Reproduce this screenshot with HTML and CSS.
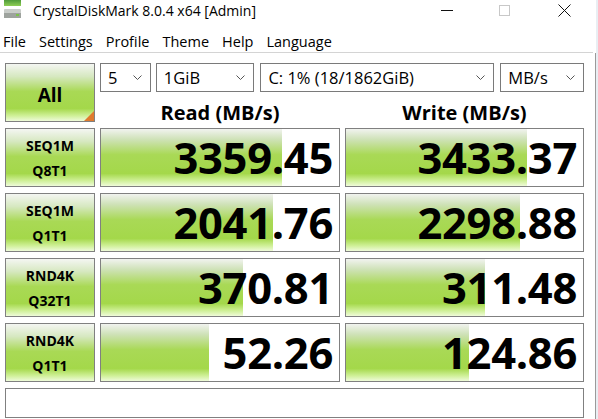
FILE: index.html
```html
<!DOCTYPE html>
<html lang="en">
<head>
  <meta charset="UTF-8" />
  <meta name="viewport" content="width=device-width, initial-scale=1.0" />
  <title>CrystalDiskMark 8.0.4 x64 [Admin]</title>
  <link rel="stylesheet" href="styles.css">
</head>
<body>
  <div class="window">
    <div class="titlebar">
      <svg class="app-icon" width="20" height="20" viewBox="0 0 20 20">
        <defs>
          <linearGradient id="lid" x1="0" y1="0" x2="0" y2="1">
            <stop offset="0" stop-color="#4f9a3a" />
            <stop offset="1" stop-color="#8fcf55" />
          </linearGradient>
        </defs>
        <rect x="1" y="0" width="17" height="6" fill="url(#lid)" />
        <rect x="1" y="9" width="17" height="9" rx="1" fill="#c9cdc9" />
        <rect x="1" y="13" width="17" height="5" fill="#9ea39e" />
        <rect x="13" y="14" width="3" height="2" fill="#7cc24a" />
      </svg>
      <span class="title-text">CrystalDiskMark 8.0.4 x64 [Admin]</span>
      <div class="win-controls">
        <span class="ctl ctl-min"></span>
        <span class="ctl ctl-max"></span>
        <svg class="ctl ctl-close" width="13" height="13" viewBox="0 0 13 13">
          <path d="M0.5 0.5 L12.5 12.5 M12.5 0.5 L0.5 12.5" stroke="#111" stroke-width="1" />
        </svg>
      </div>
    </div>

    <div class="menubar">
      <span>File</span>
      <span>Settings</span>
      <span>Profile</span>
      <span>Theme</span>
      <span>Help</span>
      <span>Language</span>
    </div>

    <div class="content">
      <div class="board">
        <div class="all-btn">All</div>

        <div class="controls">
          <div class="select sel-count">5 <svg class="chev" width="9" height="5" viewBox="0 0 9 5"><path d="M0.5 0.5 L4.5 4.5 L8.5 0.5" fill="none" stroke="#555" /></svg></div>
          <div class="select sel-size">1GiB <svg class="chev" width="9" height="5" viewBox="0 0 9 5"><path d="M0.5 0.5 L4.5 4.5 L8.5 0.5" fill="none" stroke="#555" /></svg></div>
          <div class="select sel-drive">C: 1% (18/1862GiB) <svg class="chev" width="9" height="5" viewBox="0 0 9 5"><path d="M0.5 0.5 L4.5 4.5 L8.5 0.5" fill="none" stroke="#555" /></svg></div>
          <div class="select sel-unit">MB/s <svg class="chev" width="9" height="5" viewBox="0 0 9 5"><path d="M0.5 0.5 L4.5 4.5 L8.5 0.5" fill="none" stroke="#555" /></svg></div>
        </div>

        <div class="col-head">Read (MB/s)</div>
        <div class="col-head">Write (MB/s)</div>

        <div class="test-label">SEQ1M<br>Q8T1</div>
        <div class="result" style="--w: 181px">3359.45</div>
        <div class="result" style="--w: 181px">3433.37</div>

        <div class="test-label">SEQ1M<br>Q1T1</div>
        <div class="result" style="--w: 172px">2041.76</div>
        <div class="result" style="--w: 174px">2298.88</div>

        <div class="test-label">RND4K<br>Q32T1</div>
        <div class="result" style="--w: 142px">370.81</div>
        <div class="result" style="--w: 139px">311.48</div>

        <div class="test-label">RND4K<br>Q1T1</div>
        <div class="result" style="--w: 108px">52.26</div>
        <div class="result" style="--w: 123px">124.86</div>

        <div class="status-box"></div>
      </div>
    </div>
  </div>
</body>
</html>
```

FILE: styles.css
```css
body {
  margin: 0;
  background: #e9eef3;
  font-family: 'Open Sans', 'Noto Sans', sans-serif;
  color: #000;
}

.window {
  width: 596px;
  height: 419px;
  background: #fff;
  overflow: hidden;
}

/* title bar */
.titlebar {
  height: 21px;
  display: flex;
  align-items: center;
  position: relative;
}

.app-icon {
  margin: 0 0 2px 3px;
  align-self: flex-start;
}

.title-text {
  margin-left: 10px;
  font-size: 14px;
}

.win-controls {
  margin-left: auto;
  display: flex;
  align-items: center;
}

.ctl-min {
  width: 12px;
  height: 1px;
  background: #111;
  margin-right: 46px;
}

.ctl-max {
  width: 11px;
  height: 11px;
  border: 1px solid #c8c8c8;
  box-sizing: border-box;
  margin-right: 48px;
}

.ctl-close {
  margin-right: 25px;
}

/* menu */
.menubar {
  margin-top: 9px;
  height: 22px;
  display: flex;
  align-items: center;
  gap: 13px;
  padding-left: 3px;
  font-size: 14.5px;
  border-bottom: 1px solid #d4d4d4;
  margin-right: 3px;
}

/* main area */
.content {
  border-right: 1px solid #9a9a9a;
  height: 366px;
}

.board {
  display: grid;
  grid-template-columns: 90px 240px 239px;
  grid-template-rows: 29px 24px repeat(4, 59px) 30px;
  column-gap: 5px;
  row-gap: 6px;
  padding: 10px 0 0 5px;
}

.all-btn,
.test-label {
  border: 1px solid #808080;
  background: linear-gradient(to bottom, #f4f6f2 0%, #d6e8c0 22%, #a9d955 48%, #a4d84a 78%, #cdef93 90%, #eefbd9 100%);
  font-weight: bold;
  display: flex;
  align-items: center;
  justify-content: center;
  text-align: center;
}

.all-btn {
  grid-row: 1 / span 2;
  font-size: 19px;
  padding-top: 5px;
  box-sizing: border-box;
  position: relative;
}

.all-btn::after {
  content: "";
  position: absolute;
  right: 0;
  bottom: 0;
  border-style: solid;
  border-width: 0 0 10px 10px;
  border-color: transparent transparent #e07a2e transparent;
}

.controls {
  grid-column: 2 / span 2;
  display: flex;
  gap: 5px;
}

.select {
  border: 1px solid #7a7a7a;
  display: flex;
  align-items: center;
  padding-left: 7px;
  font-size: 16.5px;
  box-sizing: border-box;
}

.chev {
  margin-left: auto;
  margin-right: 8px;
}

.sel-count { width: 51px; }
.sel-size { width: 99px; }
.sel-drive { width: 235px; margin-left: 1px; }
.sel-unit { width: 84px; margin-left: 1px; }

.col-head {
  font-size: 20px;
  font-weight: bold;
  text-align: center;
  line-height: 24px;
  padding-top: 3px;
  white-space: nowrap;
}

.col-head:nth-of-type(3) {
  grid-column: 2;
}

.test-label {
  font-size: 14px;
  line-height: 25px;
}

.result {
  border: 1px solid #808080;
  background-color: #fff;
  background-image: linear-gradient(to bottom, #f1f3ef 0%, #cfe2b8 18%, #a9d956 45%, #a4d84a 78%, #cdef93 90%, #effbd9 100%);
  background-size: var(--w) 100%;
  background-repeat: no-repeat;
  font-size: 43.5px;
  font-weight: bold;
  text-align: right;
  line-height: 57px;
  padding-right: 6px;
  letter-spacing: -0.3px;
}

.status-box {
  grid-column: 1 / span 3;
  border: 1px solid #808080;
}
```
